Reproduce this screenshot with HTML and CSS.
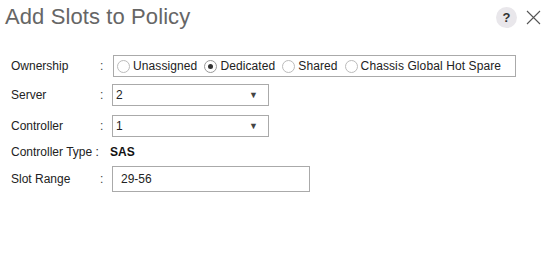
FILE: index.html
```html
<!DOCTYPE html>
<html lang="en">
<head>
    <meta charset="UTF-8">
    <title>Add Slots to Policy</title>
    <link rel="stylesheet" href="styles.css">
</head>
<body>
    <div class="dialog">
        <div class="header">
            <h1 class="title">Add Slots to Policy</h1>
            <div class="tools">
                <span class="help">?</span>
                <svg class="close" width="15" height="15" viewBox="0 0 15 15">
                    <path d="M1 1 L14 14 M14 1 L1 14" stroke="#555" stroke-width="1.1" fill="none"/>
                </svg>
            </div>
        </div>

        <div class="form">
            <div class="row row-owner">
                <span class="label">Ownership</span>
                <span class="colon">:</span>
                <div class="radio-group">
                    <label class="radio"><span class="dot"></span>Unassigned</label>
                    <label class="radio"><span class="dot checked"></span>Dedicated</label>
                    <label class="radio"><span class="dot"></span>Shared</label>
                    <label class="radio"><span class="dot"></span>Chassis Global Hot Spare</label>
                </div>
            </div>

            <div class="row row-server">
                <span class="label">Server</span>
                <span class="colon">:</span>
                <div class="select"><span>2</span><span class="arrow">&#9660;</span></div>
            </div>

            <div class="row row-controller">
                <span class="label">Controller</span>
                <span class="colon">:</span>
                <div class="select"><span>1</span><span class="arrow">&#9660;</span></div>
            </div>

            <div class="row row-type">
                <span class="label">Controller Type :</span>
                <span class="value">SAS</span>
            </div>

            <div class="row row-range">
                <span class="label">Slot Range</span>
                <span class="colon">:</span>
                <div class="input">29-56</div>
            </div>
        </div>
    </div>
</body>
</html>
```

FILE: styles.css
```css
body {
    margin: 0;
    background-color: #fff;
    font-family: "Liberation Sans", Arial, sans-serif;
    font-size: 12px;
    color: #222;
}

.dialog {
    width: 549px;
    height: 266px;
}

.header {
    display: flex;
    justify-content: space-between;
    align-items: center;
    height: 34px;
    padding: 0 8px 0 5px;
}

.title {
    margin: 0;
    font-size: 22px;
    font-weight: normal;
    color: #666;
    letter-spacing: 0.1px;
}

.tools {
    display: flex;
    align-items: center;
    gap: 9px;
}

.help {
    width: 21px;
    height: 21px;
    border-radius: 50%;
    background-color: #e9e7eb;
    color: #333;
    font-weight: bold;
    font-size: 13px;
    display: flex;
    align-items: center;
    justify-content: center;
}

.form {
    padding: 21px 0 0 11px;
}

.row {
    display: flex;
    align-items: center;
    white-space: nowrap;
}

.label {
    width: 89px;
    color: #222;
}

.colon {
    width: 12px;
    color: #444;
}

.row-owner {
    height: 22px;
}

.row-server {
    margin-top: 7px;
    height: 22px;
}

.row-controller {
    margin-top: 9px;
    height: 22px;
}

.row-type {
    margin-top: 7px;
    height: 16px;
}

.row-type .label {
    width: 99px;
}

.row-range {
    margin-top: 6px;
    height: 26px;
}

.radio-group {
    display: flex;
    align-items: center;
    height: 20px;
    width: 398px;
    margin-left: 1px;
    padding-left: 3px;
    border: 1px solid #aaa;
}

.radio {
    display: flex;
    align-items: center;
    flex-shrink: 0;
    margin-right: 7px;
    color: #222;
    letter-spacing: 0.1px;
}

.dot {
    width: 11px;
    height: 11px;
    border: 1px solid #bbb;
    border-radius: 50%;
    margin-right: 3px;
    position: relative;
    background-color: #fff;
}

.dot.checked {
    border-color: #999;
}

.dot.checked::after {
    content: "";
    position: absolute;
    left: 3px;
    top: 3px;
    width: 5px;
    height: 5px;
    border-radius: 50%;
    background-color: #333;
}

.select {
    display: flex;
    justify-content: space-between;
    align-items: center;
    box-sizing: border-box;
    width: 157px;
    height: 22px;
    padding: 0 10px 0 3px;
    border: 1px solid #aaa;
}

.arrow {
    font-size: 9px;
    color: #444;
}

.value {
    font-weight: bold;
    color: #111;
}

.input {
    display: flex;
    align-items: center;
    box-sizing: border-box;
    width: 198px;
    height: 26px;
    padding-left: 8px;
    border: 1px solid #aaa;
}
```
